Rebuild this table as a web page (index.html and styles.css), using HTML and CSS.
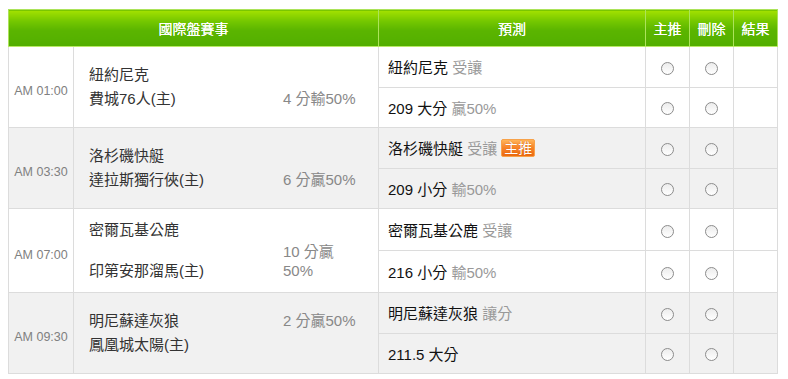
FILE: index.html
```html
<!DOCTYPE html>
<html lang="zh-Hant">
<head>
<meta charset="utf-8">
<title>國際盤賽事</title>
<link rel="stylesheet" href="styles.css">
</head>
<body>
<table class="board">
  <colgroup>
    <col class="c-time"><col class="c-match"><col class="c-pred"><col class="c-pick"><col class="c-pick"><col class="c-pick">
  </colgroup>
  <thead>
    <tr><th colspan="2">國際盤賽事</th><th>預測</th><th>主推</th><th>刪除</th><th>結果</th></tr>
  </thead>
  <tbody class="game">
    <tr>
      <td class="time" rowspan="2">AM 01:00</td>
      <td class="match" rowspan="2">
        <div class="line"><span class="team">紐約尼克</span></div>
        <div class="line"><span class="team">費城76人(主)</span><span class="odds">4 分輸50%</span></div>
      </td>
      <td class="pred">紐約尼克 <span class="note">受讓</span></td>
      <td class="pick"><input type="radio" name="p1"></td>
      <td class="pick"><input type="radio" name="d1"></td>
      <td class="pick"></td>
    </tr>
    <tr>
      <td class="pred">209 大分 <span class="note">贏50%</span></td>
      <td class="pick"><input type="radio" name="p2"></td>
      <td class="pick"><input type="radio" name="d2"></td>
      <td class="pick"></td>
    </tr>
  </tbody>
  <tbody class="game alt">
    <tr>
      <td class="time" rowspan="2">AM 03:30</td>
      <td class="match" rowspan="2">
        <div class="line"><span class="team">洛杉磯快艇</span></div>
        <div class="line"><span class="team">達拉斯獨行俠(主)</span><span class="odds">6 分贏50%</span></div>
      </td>
      <td class="pred">洛杉磯快艇 <span class="note">受讓</span><span class="badge">主推</span></td>
      <td class="pick"><input type="radio" name="p3"></td>
      <td class="pick"><input type="radio" name="d3"></td>
      <td class="pick"></td>
    </tr>
    <tr>
      <td class="pred">209 小分 <span class="note">輸50%</span></td>
      <td class="pick"><input type="radio" name="p4"></td>
      <td class="pick"><input type="radio" name="d4"></td>
      <td class="pick"></td>
    </tr>
  </tbody>
  <tbody class="game">
    <tr>
      <td class="time" rowspan="2">AM 07:00</td>
      <td class="match" rowspan="2">
        <div class="line"><span class="team">密爾瓦基公鹿</span></div>
        <div class="line"><span class="team">印第安那溜馬(主)</span><span class="odds">10 分贏50%</span></div>
      </td>
      <td class="pred">密爾瓦基公鹿 <span class="note">受讓</span></td>
      <td class="pick"><input type="radio" name="p5"></td>
      <td class="pick"><input type="radio" name="d5"></td>
      <td class="pick"></td>
    </tr>
    <tr>
      <td class="pred">216 小分 <span class="note">輸50%</span></td>
      <td class="pick"><input type="radio" name="p6"></td>
      <td class="pick"><input type="radio" name="d6"></td>
      <td class="pick"></td>
    </tr>
  </tbody>
  <tbody class="game alt">
    <tr>
      <td class="time" rowspan="2">AM 09:30</td>
      <td class="match" rowspan="2">
        <div class="line"><span class="team">明尼蘇達灰狼</span><span class="odds">2 分贏50%</span></div>
        <div class="line"><span class="team">鳳凰城太陽(主)</span></div>
      </td>
      <td class="pred">明尼蘇達灰狼 <span class="note">讓分</span></td>
      <td class="pick"><input type="radio" name="p7"></td>
      <td class="pick"><input type="radio" name="d7"></td>
      <td class="pick"></td>
    </tr>
    <tr>
      <td class="pred">211.5 大分</td>
      <td class="pick"><input type="radio" name="p8"></td>
      <td class="pick"><input type="radio" name="d8"></td>
      <td class="pick"></td>
    </tr>
  </tbody>
</table>
</body>
</html>
```
FILE: styles.css
```css
body {
  margin: 9px 8px 8px;
  background: #fff;
  font-family: "Liberation Sans", "Noto Sans CJK TC", sans-serif;
  font-size: 15px;
  color: #000;
}

.board {
  width: 770px;
  table-layout: fixed;
  border-collapse: collapse;
}

.c-time { width: 65px; }
.c-match { width: 305px; }
.c-pred { width: 267px; }
.c-pick { width: 44px; }

.board th {
  height: 36px;
  padding: 0;
  font-size: 14px;
  font-weight: normal;
  color: #fff;
  text-align: center;
  text-shadow: 0 0 0.6px #fff;
  background: linear-gradient(to bottom, #a4e200 0%, #74c700 30%, #5bb500 55%, #52ae00 100%);
  border: 1px solid #ace35a;
  border-bottom-color: #b9ea66;
}

.board td {
  border: 1px solid #dcdcdc;
  padding: 0;
  height: 39.5px;
  vertical-align: middle;
}

.game.alt td { background: #f1f1f1; }

.board td.time {
  padding-top: 8px;
  text-align: center;
  font-size: 12.5px;
  color: #808080;
}

.board td.match {
  padding: 9px 8px 9px 15px;
  color: #333;
}

.line { line-height: 24px; white-space: nowrap; }

.team {
  display: inline-block;
  width: 194px;
}

.odds {
  display: inline-block;
  width: 76px;
  line-height: 19px;
  white-space: normal;
  color: #888;
}

.board td.pred {
  padding-left: 9px;
  color: #111;
}

.note { color: #999; }

.badge {
  display: inline-block;
  margin-left: 4px;
  padding: 0 2px;
  height: 16px;
  line-height: 16px;
  font-size: 14px;
  color: #fff;
  text-shadow: 0 0 1px #c04a00;
  vertical-align: 1px;
  background: linear-gradient(to bottom, #ffb55a 0%, #f8862a 45%, #ec6a10 100%);
  border: 1px solid #f7a24a;
  border-radius: 2px;
}

.pick { text-align: center; }

.pick input {
  -webkit-appearance: none;
  appearance: none;
  display: inline-block;
  width: 13px;
  height: 13px;
  margin: 0;
  vertical-align: middle;
  border: 1px solid #8c8c8c;
  border-radius: 50%;
  background: linear-gradient(to bottom, #ececec, #ffffff);
}
```
